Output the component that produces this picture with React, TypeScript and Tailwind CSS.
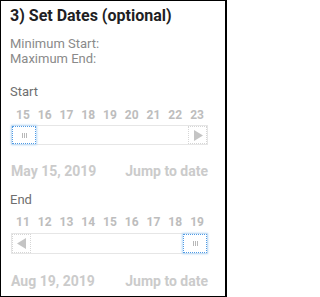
import React from "react";

const Grip = () => (
  <div className="flex gap-[1px]">
    <div className="w-[1px] h-[5px] bg-[#b8b8b8]" />
    <div className="w-[1px] h-[5px] bg-[#b8b8b8]" />
    <div className="w-[1px] h-[5px] bg-[#b8b8b8]" />
  </div>
);

const Thumb = () => (
  <div className="w-[24px] h-full border border-dotted border-[#4f9be6] shadow-[0_0_2px_1px_#b9d9f7] bg-white flex items-center justify-center shrink-0">
    <Grip />
  </div>
);

const Arrow = ({ dir }: { dir: "left" | "right" }) => (
  <div className="w-[19px] h-full border border-dotted border-[#d6d6d6] flex items-center justify-center shrink-0">
    <svg width="10" height="11" viewBox="0 0 10 11">
      {dir === "right" ? (
        <polygon points="1,0 10,5.5 1,11" fill="#c4c4c4" />
      ) : (
        <polygon points="9,0 0,5.5 9,11" fill="#c4c4c4" />
      )}
    </svg>
  </div>
);

const Numbers = ({ nums }: { nums: number[] }) => (
  <div className="flex justify-between pl-[6px] pr-[4px] text-[12px] leading-[13px] font-bold text-[#bdbdbd]">
    {nums.map((n) => (
      <span key={n}>{n}</span>
    ))}
  </div>
);

export default function App() {
  return (
    <div
      className="w-[227px] h-[297px] border border-r-2 border-black bg-white pl-[9px] pr-[17px] pt-[5px] overflow-hidden"
      style={{ fontFamily: "Roboto, 'Liberation Sans', sans-serif" }}
    >
      <div className="text-[16px] leading-[20px] font-bold text-[#1f1f24]">3) Set Dates (optional)</div>
      <div className="mt-[10px] text-[13px] leading-[15px] text-[#8a8a8a]">
        <div>Minimum Start:</div>
        <div>Maximum End:</div>
      </div>
      <div className="mt-[18px] text-[13px] leading-[15px] text-[#6e6e6e]">Start</div>
      <div className="mt-[10px]">
        <Numbers nums={[15, 16, 17, 18, 19, 20, 21, 22, 23]} />
      </div>
      <div className="mt-[3px] ml-[1px] h-[20px] border border-[#e6e6e6] flex justify-between">
        <Thumb />
        <Arrow dir="right" />
      </div>
      <div className="mt-[18px] ml-[1px] flex justify-between text-[14px] leading-[16px] font-bold text-[#cbcbcb]">
        <span>May 15, 2019</span>
        <span>Jump to date</span>
      </div>
      <div className="mt-[13px] text-[13px] leading-[15px] text-[#6e6e6e]">End</div>
      <div className="mt-[9px]">
        <Numbers nums={[11, 12, 13, 14, 15, 16, 17, 18, 19]} />
      </div>
      <div className="mt-[4px] ml-[1px] h-[21px] border border-[#e6e6e6] flex justify-between">
        <Arrow dir="left" />
        <Thumb />
      </div>
      <div className="mt-[19px] ml-[1px] flex justify-between text-[14px] leading-[16px] font-bold text-[#cbcbcb]">
        <span>Aug 19, 2019</span>
        <span>Jump to date</span>
      </div>
    </div>
  );
}
